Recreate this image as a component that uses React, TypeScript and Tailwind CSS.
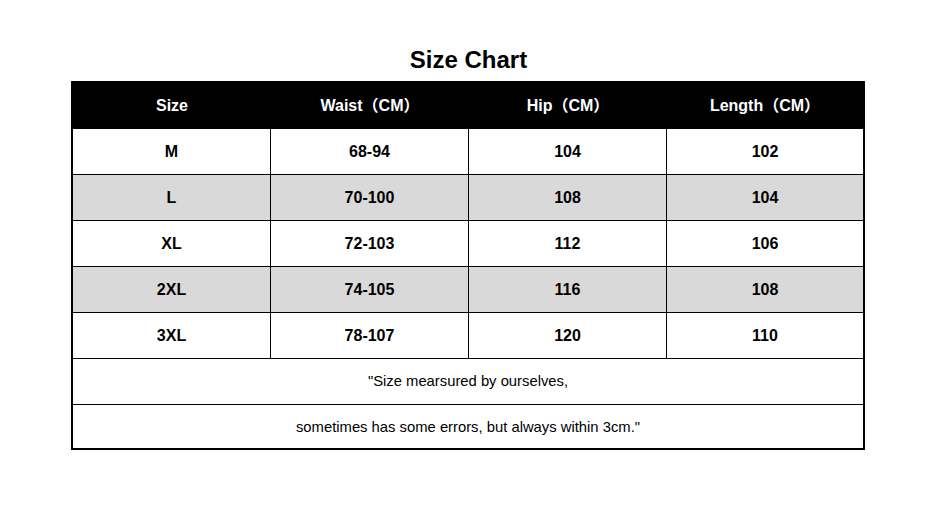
import React from "react";

const rows = [
  ["M", "68-94", "104", "102"],
  ["L", "70-100", "108", "104"],
  ["XL", "72-103", "112", "106"],
  ["2XL", "74-105", "116", "108"],
  ["3XL", "78-107", "120", "110"],
];

const font = { fontFamily: '"Liberation Sans", Arial, "Noto Sans CJK SC", sans-serif' };

export default function App() {
  return (
    <div className="w-[937px] h-[505px] bg-white pt-[45px]" style={font}>
      <div className="h-[30px] leading-[30px] text-center text-[24px] font-bold text-black">Size Chart</div>
      <div className="ml-[71px] mt-[6px] w-[794px] border-2 border-black">
        <div className="grid grid-cols-[198px_198px_198px_1fr] h-[46px] bg-black text-white text-[16px] font-bold">
          {["Size", "Waist（CM）", "Hip（CM）", "Length（CM）"].map((h) => (
            <div key={h} className="flex items-center justify-center">{h}</div>
          ))}
        </div>
        {rows.map((r, i) => (
          <div
            key={r[0]}
            className={`grid grid-cols-[198px_198px_198px_1fr] h-[46px] border-b border-black text-[16px] font-bold text-black ${i % 2 === 1 ? "bg-[#d9d9d9]" : "bg-white"}`}
          >
            {r.map((c, j) => (
              <div key={j} className={`flex items-center justify-center ${j < 3 ? "border-r border-black" : ""}`}>{c}</div>
            ))}
          </div>
        ))}
        <div className="h-[46px] border-b border-black flex items-center justify-center text-[14.8px] text-black">
          "Size mearsured by ourselves,
        </div>
        <div className="h-[43px] pt-[2px] flex items-center justify-center text-[14.8px] text-black">
          sometimes has some errors, but always within 3cm."
        </div>
      </div>
    </div>
  );
}
